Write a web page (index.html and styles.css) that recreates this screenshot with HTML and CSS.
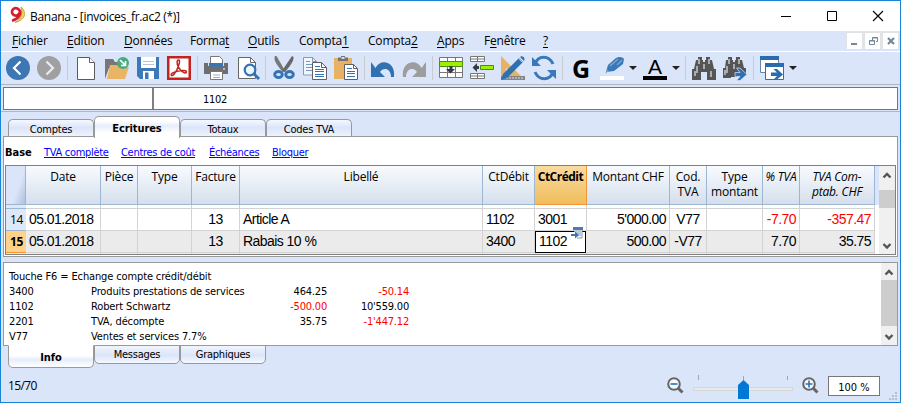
FILE: index.html
```html
<!DOCTYPE html>
<html lang="fr">
<head>
<meta charset="utf-8">
<title>Banana - [invoices_fr.ac2 (*)]</title>
<link rel="stylesheet" href="styles.css">
</head>
<body>
<div class="window">
  <header class="titlebar">
    <svg class="logo" width="17" height="18" viewBox="0 0 17 18"><path d="M12 1C18 6 17 14 6 16.500C12 13 14 8 12 1Z" fill="#f3cf52" stroke="#b38b35" stroke-width=".7"/><path d="M10.500 6.500A3.800 3.800 0 1 1 9.500 3.200C13 6 11 12.500 3 14.800" fill="none" stroke="#d21f2d" stroke-width="2.700"/></svg>
    <span class="title">Banana - [invoices_fr.ac2 (*)]</span>
    <div class="caption">
      <svg width="10" height="10"><path d="M0 5.500H10" stroke="#000"/></svg>
      <svg width="10" height="10"><path d="M.5.5h9v9h-9z" fill="none" stroke="#000"/></svg>
      <svg width="10" height="10"><path d="M0 0L10 10M10 0L0 10" stroke="#000" stroke-width="1.100"/></svg>
    </div>
  </header>

  <nav class="menubar">
    <span class="m-fichier"><u>F</u>ichier</span>
    <span class="m-edition"><u>E</u>dition</span>
    <span class="m-donnees"><u>D</u>onnées</span>
    <span class="m-format">Forma<u>t</u></span>
    <span class="m-outils"><u>O</u>utils</span>
    <span class="m-compta">Compta<u>1</u></span>
    <span class="m-compta">Compta<u>2</u></span>
    <span class="m-apps"><u>A</u>pps</span>
    <span class="m-fenetre">F<u>e</u>nêtre</span>
    <span><u>?</u></span>
    <div class="mdi">
      <b><svg width="16" height="16"><path d="M4 11h6" stroke="#74879b" stroke-width="2"/></svg></b>
      <b><svg width="16" height="16"><path d="M7.500 7V4.500h5v4H11M4.500 7.500h5v4h-5zM4 8h6M7 5h6" fill="none" stroke="#74879b"/></svg></b>
      <b><svg width="16" height="16"><path d="M5 5l6 6M11 5l-6 6" stroke="#74879b" stroke-width="2.200"/></svg></b>
    </div>
  </nav>

  <div class="toolbar">
    <svg class="ico" viewBox="0 0 24 24"><circle cx="12" cy="12" r="12" fill="#3c76b3"/><path d="M14.500 5.500L8 12l6.500 6.500" fill="none" stroke="#fff" stroke-width="2.200"/></svg>
    <svg class="ico" viewBox="0 0 24 24"><circle cx="12" cy="12" r="12" fill="#a0a0a0"/><path d="M9.500 5.500L16 12l-6.500 6.500" fill="none" stroke="#e8ebf2" stroke-width="2.200"/></svg>
    <i class="sep"></i>
    <svg class="ico" viewBox="0 0 24 24"><path d="M3.500 1.500h12l5 5v17h-17z" fill="#fff" stroke="#5c5c5c"/><path d="M15.500 1.500v5h5" fill="#fff" stroke="#5c5c5c"/></svg>
    <svg class="ico" viewBox="0 0 24 24"><path d="M0 3h8l2 3h9v6H4L0 23z" fill="#777"/><path d="M5 9h7l2 2h10l-4 12H2z" fill="#e9b564"/><circle cx="18" cy="7" r="6" fill="#48ab80"/><path d="M15 4l5 5M20.500 5v4.500H16" fill="none" stroke="#fff" stroke-width="1.700"/></svg>
    <svg class="ico" viewBox="0 0 24 24"><path d="M1 1h22v22H4l-3-3z" fill="#3d79b9"/><path d="M5 1h15v11H5zM7 15h11v8H7z" fill="#fff"/><path d="M7 5.500h11M7 8.500h11" stroke="#b8c5d5" stroke-width="1.200"/><path d="M9 16.500h3.500V23H9z" fill="#3d79b9"/></svg>
    <svg class="ico" viewBox="0 0 24 24"><path d="M1.250 1.250h21.500v21.500H1.250z" fill="#fff" stroke="#c2231f" stroke-width="2.500"/><path d="M10.800 4.200c2.300-.9 2 2 .8 5.300C10.400 13 8 18 5.500 19.500c-1.600.5-2-1.100-.2-2.300 3-2 8-3 11.700-2.700 3.500.4 3 2.900.3 2.300-3-.7-6.200-5.500-7-8.500-.4-2-.3-3.500.5-4.100z" fill="none" stroke="#c2231f" stroke-width="1.500"/></svg>
    <i class="sep"></i>
    <svg class="ico" viewBox="0 0 24 24"><path d="M6.500.5h9l3 3V10h-12z" fill="#fff" stroke="#777"/><path d="M0 7h4v3h16V7h4v11H0z" fill="#6e6e6e"/><path d="M5 7h14v3.500H5z" fill="#3576b9"/><path d="M6.500 15.500h12v8h-12z" fill="#fff" stroke="#777"/><path d="M9 19h7M9 21.500h7" stroke="#8eb0d4"/><path d="M19 13h2" stroke="#fff"/></svg>
    <svg class="ico" viewBox="0 0 24 24"><path d="M3.500 1.500h12l5 5v16h-17z" fill="#fff" stroke="#666"/><path d="M15.500 1.500v5h5" fill="none" stroke="#666"/><circle cx="15" cy="14" r="5.300" fill="#edf4fb" stroke="#3373b3" stroke-width="2.200"/><path d="M19 18l5 5" stroke="#3373b3" stroke-width="3"/></svg>
    <i class="sep"></i>
    <svg class="ico" viewBox="0 0 24 24"><path d="M3 0C1.500 3 3 7 10 15l3.500.5L4.500 0z" fill="#777"/><path d="M20 0l1.500 1C22 5 18 10 13 16l-3.500-.5z" fill="#686868"/><ellipse cx="6.500" cy="18.500" rx="3.800" ry="3" fill="#dbe5f9" stroke="#3474b5" stroke-width="2.900"/><ellipse cx="17.500" cy="18.500" rx="3.800" ry="3" fill="#dbe5f9" stroke="#3474b5" stroke-width="2.900"/></svg>
    <svg class="ico" viewBox="0 0 24 24"><path d="M.5 1.500h9l4 4V19H.5z" fill="#f2f7fd" stroke="#899bad"/><path d="M9.500 1.500v4h4M3 5.500h4M3 8.500h6M3 11.500h6M3 14.500h6" fill="none" stroke="#6f9bc6"/><path d="M9.500 6.500h9l5 5v12h-14z" fill="#fff" stroke="#606060"/><path d="M18.500 6.500v5h5" fill="none" stroke="#606060"/><path d="M12 10.500h5M12 13.500h9M12 15.500h9M12 18.500h9M12 20.500h9" stroke="#3474b5"/></svg>
    <svg class="ico" viewBox="0 0 24 24"><path d="M0 2h18v21H0z" fill="#e7b264"/><path d="M4 1.500h3V0h4v1.500h3V5H4z" fill="#737373"/><path d="M7.500 1.200h3v1.500h-3z" fill="#fff"/><path d="M10.500 8.500h9l4 4v11h-13z" fill="#fff" stroke="#606060"/><path d="M19.500 8.500v4h4" fill="none" stroke="#606060"/><path d="M13 12.500h5M13 15.500h8M13 17.500h8M13 20.500h8" stroke="#3474b5"/></svg>
    <i class="sep"></i>
    <svg class="ico" viewBox="0 0 24 24"><path d="M0 6v15h14l-5-5c3-5 11-4 11 5h3c2-16-14-19-18.500-9z" fill="#3071b2"/></svg>
    <svg class="ico" viewBox="0 0 24 24"><path d="M24 6v15H10l5-5C12 11 4 12 4 21H1C-1 5 15 2 19.500 12z" fill="#9d9d9d"/></svg>
    <i class="sep"></i>
    <svg class="ico" viewBox="0 0 24 24"><path d="M.5 1.500h23v20H.5zM.5 16.500h23M8.500 1.500v20M16.500 1.500v20" fill="#fff" stroke="#777"/><path d="M.5 5.500h23v5H.5z" fill="#9df000" stroke="#4d8a16"/><path d="M10.500 10h3v3H16l-4.500 4.500L7 13h3.500z" fill="#333a44"/></svg>
    <svg class="ico" viewBox="0 0 24 24"><path d="M.5.5h14v5H.5zM.5 17.500h14v5H.5zM7.500.5v5M7.500 17.500v5M.5 3h14M.5 20h14" fill="#fff" stroke="#777"/><path d="M10.500 9.500h13v4h-13z" fill="#9df000" stroke="#4d8a16"/><path d="M9 10v3H7v3l-4.500-4.500L7 7v3z" fill="#333a44"/></svg>
    <svg class="ico" viewBox="0 0 24 24"><path d="M0 0l20 20H0zM5 12v4h4z" fill="#e7b264" fill-rule="evenodd"/><path d="M0 20h24v4H0z" fill="#858585"/><path d="M3 21v2M6 21v2M9 21v2M12 21v2M15 21v2M18 21v2M21 21v2" stroke="#d9dde5"/><path d="M2 18L18 2l4 4L6 22l-6 2zM19 1c2-2 6 1 4 4z" fill="#2d70b4"/><path d="M17.500 2.500l4 4" stroke="#b7cce5"/></svg>
    <svg class="ico" viewBox="0 0 24 24"><path d="M3 8C6-1 17-1 21 8M21 16C18 25 7 25 3 16" fill="none" stroke="#3979b9" stroke-width="3"/><path d="M0 1v9h9zM24 23v-9h-9z" fill="#3979b9"/></svg>
    <i class="sep"></i>
    <b class="bold-g">G</b>
    <svg class="ico" viewBox="0 0 24 24"><path d="M0 20h24v4H0z" fill="#fff"/><path d="M6 16L8 9l8-7c3-2 7-1 8 1l-1 5-9 7z" fill="#3979b9"/><path d="M8 14l-2 3M10 10L18 3M17 9l5-5" stroke="#82a7cd" stroke-width="1.200"/></svg>
    <i class="drop"></i>
    <b class="font-a">A</b>
    <i class="drop"></i>
    <i class="sep"></i>
    <svg class="ico" viewBox="0 0 24 24"><path d="M6 1h4v3h1v2h2V4h1V1h4v3h2l2 9h2v11h-9v-8H9v8H0V13h2L4 4h2z" fill="#555"/><path d="M7 3v5M5 10v7M17 3v5M19 15v6M12 8v5M3 15v5" stroke="#e6e6e6" stroke-width="1.200"/></svg>
    <svg class="ico" viewBox="0 0 24 24"><path d="M5 1h4v3h1v2h2V4h1V1h4v3h2l2 8h2v5h-9v4H8v1H0V12h2L3 4h2z" fill="#555"/><path d="M6 3v5M4 10v7M16 3v5M11 8v5M2 14v5" stroke="#e6e6e6" stroke-width="1.200"/><path d="M12 16.500h5L13.500 12H17l7 6.500-7 6h-3.500l3.500-4h-5z" fill="#2d70b4" stroke="#dbe5f9" stroke-width=".7"/></svg>
    <i class="sep"></i>
    <svg class="ico" viewBox="0 0 24 24"><path d="M.5.5h18v16H.5z" fill="#fff" stroke="#6688ad"/><path d="M0 0h19v4H0z" fill="#286cad"/><path d="M5.500 7.500h18v16h-18z" fill="#fff" stroke="#626262"/><path d="M5 7h19v4H5z" fill="#286cad"/><path d="M11 16.500h6L13.500 13H17l6 5.500-6 5h-3.500l3.500-3.500h-6z" fill="#286cad"/></svg>
    <i class="drop"></i>
  </div>

  <div class="editline"><div class="ref"></div><div class="value">1102</div></div>

  <div class="tabs">
    <div class="tab">Comptes</div><div class="tab active">Ecritures</div><div class="tab">Totaux</div><div class="tab">Codes TVA</div>
  </div>

  <main class="pane">
    <div class="views"><b>Base</b><a class="v1">TVA complète</a><a class="v2">Centres de coût</a><a class="v3">Échéances</a><a>Bloquer</a></div>
    <div class="grid">
      <div class="sheet">
        <div class="row head">
          <div class="corner"></div><div>Date</div><div>Pièce</div><div>Type</div><div>Facture</div><div>Libellé</div><div>CtDébit</div><div class="current">CtCrédit</div><div>Montant CHF</div><div>Cod.<br>TVA</div><div>Type<br>montant</div><div class="it">% TVA</div><div class="it">TVA Com-<br>ptab. CHF</div>
        </div>
        <div class="row sliver"><div class="num"></div><div></div><div></div><div></div><div></div><div></div><div></div><div></div><div></div><div></div><div></div><div></div><div></div></div>
        <div class="row"><div class="num">14</div><div>05.01.2018</div><div></div><div></div><div class="c">13</div><div>Article A</div><div>1102</div><div>3001</div><div class="r">5'000.00</div><div class="c">V77</div><div></div><div class="r neg">-7.70</div><div class="r neg">-357.47</div></div>
        <div class="row selected"><div class="num">15</div><div>05.01.2018</div><div></div><div></div><div class="c">13</div><div>Rabais 10 %</div><div>3400</div>
          <div class="cursor"><span>1102</span><svg class="picker" width="12" height="12"><path d="M2 1h9v10H6M3 4h7M4 6h6M6 8h4" fill="#f5f7fb" stroke="#8a98aa"/><path d="M2 0h10v3H2z" fill="#4c7db2"/><path d="M0 7h4V4.500L8 8l-4 3.500V9H0z" fill="#3979b9"/></svg></div>
          <div class="r">500.00</div><div class="c">-V77</div><div></div><div class="r">7.70</div><div class="r">35.75</div></div>
        <div class="row tail"><div class="num"></div><div></div><div></div><div></div><div></div><div></div><div></div><div></div><div></div><div></div><div></div><div></div><div></div></div>
      </div>
      <div class="gutter"></div>
      <div class="scroll">
        <svg width="16" height="24"><path d="M4.500 11.500l3.500-3.500 3.500 3.500" fill="none" stroke="#555" stroke-width="2.400"/></svg>
        <div class="thumb short"></div>
        <svg class="down" width="16" height="16"><path d="M4.500 6l3.500 3.500L11.500 6" fill="none" stroke="#555" stroke-width="2.400"/></svg>
      </div>
    </div>
  </main>

  <section class="info">
    <div class="lines">
      <p>Touche F6 = Echange compte crédit/débit</p>
      <div class="line"><span>3400</span><span>Produits prestations de services</span><span>464.25</span><span class="neg">-50.14</span></div>
      <div class="line"><span>1102</span><span>Robert Schwartz</span><span class="neg">-500.00</span><span>10'559.00</span></div>
      <div class="line"><span>2201</span><span>TVA, décompte</span><span>35.75</span><span class="neg">-1'447.12</span></div>
      <div class="line"><span>V77</span><span>Ventes et services 7.7%</span></div>
    </div>
    <div class="scroll">
      <svg width="16" height="17"><path d="M4.500 11.500l3.500-3.500 3.500 3.500" fill="none" stroke="#555" stroke-width="2.400"/></svg>
      <div class="thumb long"></div>
      <svg class="down" width="16" height="16"><path d="M4.500 6l3.500 3.500L11.500 6" fill="none" stroke="#555" stroke-width="2.400"/></svg>
    </div>
  </section>

  <div class="tabs bottom">
    <div class="tab active">Info</div><div class="tab">Messages</div><div class="tab">Graphiques</div>
  </div>

  <footer class="status">
    <span class="count">15/70</span>
    <svg class="zoom" width="17" height="17"><circle cx="7" cy="7" r="5.800" fill="#f5f8ff" stroke="#666" stroke-width="2"/><path d="M11 11l4.500 4.500" stroke="#666" stroke-width="3"/><path d="M3.500 7h7" stroke="#2d70b4" stroke-width="1.600"/></svg>
    <svg class="slider" width="100" height="26"><path d="M5.500 2v5M50.500 3v4M94.500 3v4" stroke="#a5a59d"/><path d="M.5 14.500h99v3H.5z" fill="#e7eaea" stroke="#d5d7d8"/><path d="M45 26V12l5.500-5 5.500 5v14z" fill="#0078d7"/></svg>
    <svg class="zoom" width="17" height="17"><circle cx="7" cy="7" r="5.800" fill="#f5f8ff" stroke="#666" stroke-width="2"/><path d="M11 11l4.500 4.500" stroke="#666" stroke-width="3"/><path d="M3.500 7h7M7 3.500v7" stroke="#2d70b4" stroke-width="1.600"/></svg>
    <div class="percent">100 %</div>
    <svg class="grip" width="9" height="9"><path d="M6 0h2v2H6zM6 3h2v2H6zM3 3h2v2H3zM6 6h2v2H6zM3 6h2v2H3zM0 6h2v2H0z" fill="#b9bdc5"/></svg>
  </footer>
</div>
</body>
</html>
```
FILE: styles.css
```css
* { box-sizing: border-box; }
body { margin: 0; color: #000; font: 12px "Open Sans", "Noto Sans", sans-serif; }
svg { display: block; flex: none; overflow: visible; }
.window { width: 901px; height: 403px; border: 1px solid #1883d7; background: #dbe5f9; display: flex; flex-direction: column; overflow: hidden; white-space: nowrap; }
.titlebar { height: 30px; flex: none; background: #fff; display: flex; align-items: center; padding-left: 8px; }
.logo { margin-top: -2px; }
.title { margin-left: 4px; letter-spacing: -.3px; }
.caption { margin-left: auto; display: flex; gap: 36px; padding-right: 17px; }

.menubar { height: 21px; flex: none; border-bottom: 1px solid #fff; display: flex; align-items: center; gap: 20px; padding-left: 11px; letter-spacing: -.2px; line-height: 18px; }
.menubar u { text-underline-offset: 2px; }
.m-fichier { width: 35px; }
.m-edition { width: 37px; }
.m-donnees { width: 46px; }
.m-format { width: 38px; }
.m-outils { width: 31px; }
.m-compta { width: 49px; }
.m-apps { width: 27px; }
.m-fenetre { width: 39px; }
.mdi { margin-left: auto; display: flex; align-self: flex-start; gap: 1px; padding: 1px 1px 0 0; }
.mdi b { width: 17px; height: 18px; background: #fff; border: 1px solid #e0e2e5; }

.toolbar { height: 33px; flex: none; border-bottom: 1px solid #b2b6bd; display: flex; gap: 7px; padding: 4px 0 0 5px; }
.ico { width: 24px; height: 24px; }
.sep { width: 1px; height: 24px; margin: 0 -1px; background: #c8cacd; flex: none; }
.drop { width: 8px; height: 4px; margin: 10px -1px 0 -2px; background: #222; clip-path: polygon(0 0, 100% 0, 50% 100%); flex: none; }
.bold-g { width: 24px; height: 24px; text-align: center; font-size: 25px; line-height: 25px; }
.font-a { width: 24px; height: 24px; border-bottom: 4px solid #000; text-align: center; font: 21px/22px "Liberation Sans", Arial, sans-serif; }

.editline { height: 23px; flex: none; margin: 2px 2px 0 2px; background: #fff; border: 1px solid #6e7583; display: flex; }
.ref { width: 150px; border-right: 2px solid #808080; }
.value { padding-left: 49px; font: 11px/23px "DejaVu Sans Condensed", "DejaVu Sans", sans-serif; letter-spacing: -.3px; }

.tabs { height: 26px; flex: none; margin-top: 1px; border-top: 1px solid #b2b6bd; display: flex; align-items: flex-end; padding-left: 7px; font: 11px "DejaVu Sans Condensed", "DejaVu Sans", sans-serif; letter-spacing: -.25px; }
.tab { width: 86px; height: 18px; border: 1px solid #999; border-bottom: 0; border-radius: 5px 5px 0 0; background: linear-gradient(#f5f8ff, #dbe5f9 45%, #f0f4fd); text-align: center; line-height: 19px; }
.tab.active { height: 22px; margin-bottom: -1px; background: linear-gradient(#fff 20%, #e6edfc 42%, #fff 75%); font-weight: bold; line-height: 23px; z-index: 1; letter-spacing: -.1px; }

.pane { height: 121px; flex: none; margin: -1px 2px 0 2px; border: 1px solid #999; background: #fff; padding: 0 1px 1px; display: flex; flex-direction: column; }
.views { height: 28px; padding-top: 8px; display: flex; font: 11px/15px "DejaVu Sans Condensed", "DejaVu Sans", sans-serif; letter-spacing: -.3px; }
.views b { width: 39px; letter-spacing: 0; }
.views a { color: #00f; text-decoration: underline; }
.v1 { width: 77px; }
.v2 { width: 88px; }
.v3 { width: 63px; }
.grid { height: 90px; border: 1px solid #808080; display: flex; background: #fff; }
.sheet { width: 869px; height: 88px; }
.row { display: grid; grid-template-columns: 20px 75px 37px 54px 48px 243px 52px 52px 83px 37px 56px 37px 75px; height: 22px; font: 14px/21px "Liberation Sans", Arial, sans-serif; letter-spacing: -.55px; }
.row > div { border-right: 1px solid #d3d3d3; border-bottom: 1px solid #d3d3d3; padding: 0 3px; }
.row > .c { text-align: center; }
.row > .r { text-align: right; }
.neg { color: #f00; }
.row > .num { background: #dfe8f7; border-color: #9cb7d3; font: 12px/21px "Open Sans", sans-serif; letter-spacing: -.3px; text-align: center; border-right: 0; padding-left: 4px; }
.row.head { height: 39px; }
.row.head > div { background: linear-gradient(#f8fbff, #d5dfec); border-color: #9cb7d3; font: 12px/15px "Open Sans", sans-serif; letter-spacing: -.2px; padding: 3px 0 0; text-align: center; }
.row.head > .corner { background: linear-gradient(110deg, #dbe5f9 60%, #abc0d9); }
.row.head > .current { background: linear-gradient(#f9dba0, #f0bd5d); border-color: #f29536; font-weight: bold; letter-spacing: -.5px; }
.row.head > .it { font-style: italic; }
.row.sliver { height: 4px; }
.row.selected { background: #ebebeb; }
.row.selected > .num { background: #ffd28a; border-color: #f29536; font-weight: bold; }
.row.tail { height: 1px; }
.row.tail > div { border-bottom: 0; background: #ebebeb; }
.row.selected > .cursor { position: relative; background: #fff; border: 1px solid #000; line-height: 19px; padding-left: 3px; margin-right: 1px; }
.picker { position: absolute; right: 2px; top: -5px; }
.gutter { width: 4px; height: 39px; background: #dbe5f9; }
.scroll { width: 16px; background: #f0f0f0; display: flex; flex-direction: column; margin-left: auto; }
.scroll .down { margin-top: auto; }
.thumb { background: #cdcdcd; }
.short { height: 18px; }
.long { height: 46px; }

.info { height: 84px; flex: none; margin: 5px 2px 0 2px; border: 1px solid #999; background: #fff; display: flex; font: 11px/15px "DejaVu Sans Condensed", "DejaVu Sans", sans-serif; letter-spacing: -.13px; }
.lines { padding: 6px 0 0 5px; }
.lines p { margin: 0; }
.line { display: grid; grid-template-columns: 82px 166px 70px 82px; }
.line span:nth-child(n+3) { text-align: right; letter-spacing: -.2px; }
.tabs.bottom { height: 22px; margin-top: -1px; border: 0; align-items: flex-start; }
.bottom .tab { height: 19px; border: 1px solid #999; border-radius: 0 0 5px 5px; line-height: 18px; background: linear-gradient(#f0f4fd, #dbe5f9 55%, #f5f8ff); }
.bottom .tab.active { height: 23px; border-top-color: #fff; background: linear-gradient(#fff 45%, #e6edfc 65%, #fff); line-height: 23px; }

.status { height: 34px; flex: none; display: flex; padding-left: 7px; }
.count { width: 659px; padding-top: 10px; line-height: 17px; letter-spacing: -.6px; }
.zoom { margin-top: 10px; }
.slider { margin: 6px 9px 0; }
.percent { width: 52px; height: 20px; margin: 9px 0 0 9px; border: 1px solid #777; background: #fff; text-align: center; font: 11px/21px "DejaVu Sans Condensed", "DejaVu Sans", sans-serif; }
.grip { margin: 25px 0 0 9px; }
```
